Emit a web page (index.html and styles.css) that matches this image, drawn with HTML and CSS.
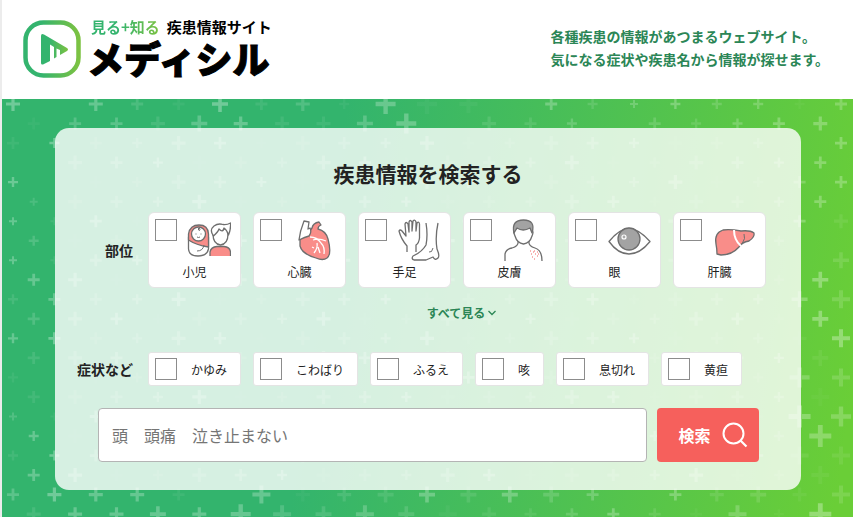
FILE: index.html
```html
<!DOCTYPE html>
<html lang="ja">
<head>
  <meta charset="UTF-8">
  <meta name="viewport" content="width=device-width, initial-scale=1.0">
  <title>メディシル</title>
  <link rel="stylesheet" href="styles.css">
</head>
<body>
  <header class="header">
    <a href="#" class="logo">
      <svg class="logo-mark" viewBox="0 0 58 58" aria-hidden="true">
        <defs>
          <linearGradient id="logo-green" x1="0" x2="1" y1="0" y2="0">
            <stop offset="0.3" stop-color="#34b46e"/>
            <stop offset="1" stop-color="#7cc242"/>
          </linearGradient>
        </defs>
        <rect x="2.5" y="2.5" width="53" height="53" rx="18" fill="none" stroke="url(#logo-green)" stroke-width="4.5"/>
        <path d="M18 16Q18 13 21 14.500L44 28Q46 29.500 44 31L37 35V30L33.500 28.500V37L31 38.500V27L27 24.500V41L20 44.500Q18 45 18 43Z" fill="url(#logo-green)"/>
      </svg>
      <span class="logo-text">
        <span class="logo-sub"><span class="logo-green">見る+知る</span><span>疾患情報サイト</span></span>
        <span class="logo-name">メディシル</span>
      </span>
    </a>
    <p class="tagline">各種疾患の情報があつまるウェブサイト。<br>気になる症状や疾患名から情報が探せます。</p>
  </header>

  <main class="hero">
    <svg id="pattern" class="pattern" aria-hidden="true"></svg>

    <form class="panel">
      <h1 class="panel-title">疾患情報を検索する</h1>

      <div class="row" role="group" aria-labelledby="label-part">
        <h2 class="row-label" id="label-part">部位</h2>
        <div class="options">
          <label class="card">
            <span class="card-top">
              <input type="checkbox" name="part">
              <svg class="card-icon" viewBox="0 0 44 44" aria-hidden="true">
                <path class="line white" d="M1.500 18V30Q2 37 11 37Q20 37 21.500 30V18Z"/>
                <path class="line pink" d="M1.500 21V15Q3 6 12 6Q21 6 21.500 15V28Q9 26 1.500 21Z"/>
                <circle class="line white" cx="11.500" cy="15" r="7"/>
                <path class="thin" d="M8.500 15h1M13.500 15h1M10 18Q11.500 19 13 18M12 11Q10 10 12 9Q14 10 12 12M17 26Q16 32 10 32"/>
                <path class="line pink" d="M23 37V33Q24 28 30 27.500H37Q43 28 43.500 33V37"/>
                <path class="line white" d="M26 15Q26 25 33.500 26Q41 25 41 15V10H27Z"/>
                <path class="line white" d="M26.500 17Q22 11 27 7Q31 4 36 5.500Q40 6 43.500 4Q44 10 41.500 16Q40 11 37 9Q36 14 32 10Q31 13 26.500 17Z"/>
              </svg>
            </span>
            <span class="card-name">小児</span>
          </label>
          <label class="card">
            <span class="card-top">
              <input type="checkbox" name="part">
              <svg class="card-icon" viewBox="0 0 44 44" aria-hidden="true">
                <path class="line pink" d="M8 21Q12 15 17 13L20 9Q21 4 27 3L29 6Q26 7 26 10Q34 12 36 20Q40 35 35 39Q31 42 24 39Q10 35 8 27Z"/>
                <path class="line white" d="M7 21Q8 12 12 2L17 3L16 10L18 9Q20 13 17 17Q13 18 7 21Z"/>
                <path class="vein" d="M18 18Q25 18 29 24Q33 28 32 35M21 21Q27 19 34 22M25 24Q26 29 22 34M26 28L28 34M22 29L20 28"/>
              </svg>
            </span>
            <span class="card-name">心臓</span>
          </label>
          <label class="card">
            <span class="card-top">
              <input type="checkbox" name="part">
              <svg class="card-icon" viewBox="0 0 44 44" aria-hidden="true">
                <path class="line" d="M10 33V27Q4 20 2 12Q3 10 5 12L9 17L8 5Q9 2 11 5L12 13V3Q13 0 15 3V12L16 2Q18 0 19 3V12L20 4Q22 2 22.500 5V19Q22 24 19 26V33"/>
                <path class="line" d="M29 4Q31 16 29 26Q25 33 16 37Q14 40 17 41H29L36 38Q38 42 41 39Q43 37 40 30Q38 18 41 4"/>
                <path class="thin" d="M36 29Q35 34 32 33"/>
              </svg>
            </span>
            <span class="card-name">手足</span>
          </label>
          <label class="card">
            <span class="card-top">
              <input type="checkbox" name="part">
              <svg class="card-icon" viewBox="0 0 44 44" aria-hidden="true">
                <path class="line" d="M3 42V35Q4 30 10 29Q17 27 16 22M27 22Q26 27 33 29Q40 31 40 42"/>
                <path class="line white" d="M12 12Q11 12 13 17Q15 24 21.500 25Q28 24 30 17Q32 12 30 12L28 9H15Z"/>
                <path class="line gray" d="M12 14Q9 1 21.500 1Q34 1 30 14L28 9Q21 13 15 9Z"/>
                <path class="rash" d="M28 32h1M32 32h1M35 33h1M29 35h1M33 35h1M30 38h1M35 37h1M32 40h1M36 35h1M31 33h1"/>
              </svg>
            </span>
            <span class="card-name">皮膚</span>
          </label>
          <label class="card">
            <span class="card-top">
              <input type="checkbox" name="part">
              <svg class="card-icon" viewBox="0 0 44 44" aria-hidden="true">
                <path class="line white" d="M2 22.500Q12 10 22 9.500Q32 10 43 22.500Q33 35 22 35Q11 35 2 22.500Z"/>
                <circle class="line gray" cx="22" cy="20" r="11"/>
                <circle cx="17" cy="18" r="2" fill="#aaa" stroke="#fff" stroke-width="1.200"/>
              </svg>
            </span>
            <span class="card-name">眼</span>
          </label>
          <label class="card">
            <span class="card-top">
              <input type="checkbox" name="part">
              <svg class="card-icon" viewBox="0 0 44 44" aria-hidden="true">
                <path class="line pink" d="M5 35Q5 30 4 25Q2 14 11 11Q18 10 29 12Q38 11 42 14Q43 18 37 22Q30 23 27 28Q20 36 9 36Z"/>
                <path d="M22 11Q22 21 29 27" fill="none" stroke="#fff" stroke-width="2"/>
                <path class="thin" d="M32 15Q34 19 30 25"/>
              </svg>
            </span>
            <span class="card-name">肝臓</span>
          </label>
        </div>
      </div>

      <div class="more">
        <button type="button" class="show-all">すべて見る
          <svg viewBox="0 0 8 6" aria-hidden="true"><path d="M0.500 1L4 4.500L7.500 1" fill="none" stroke="currentColor" stroke-width="1.300"/></svg>
        </button>
      </div>

      <div class="row" role="group" aria-labelledby="label-symptom">
        <h2 class="row-label" id="label-symptom">症状など</h2>
        <div class="options">
          <label class="chip"><input type="checkbox" name="symptom">かゆみ</label>
          <label class="chip"><input type="checkbox" name="symptom">こわばり</label>
          <label class="chip"><input type="checkbox" name="symptom">ふるえ</label>
          <label class="chip"><input type="checkbox" name="symptom">咳</label>
          <label class="chip"><input type="checkbox" name="symptom">息切れ</label>
          <label class="chip"><input type="checkbox" name="symptom">黄疸</label>
        </div>
      </div>

      <div class="search">
        <input type="text" class="search-input" aria-label="キーワード" placeholder="頭　頭痛　泣き止まない">
        <button type="submit" class="search-button">検索
          <svg viewBox="0 0 26 26" aria-hidden="true"><circle cx="11.500" cy="11.500" r="10" fill="none" stroke="currentColor" stroke-width="2"/><path d="M18.500 18.500L24.500 24.500" stroke="currentColor" stroke-width="2.200"/></svg>
        </button>
      </div>
    </form>
  </main>

  <script src="pattern.js"></script>
</body>
</html>
```

FILE: styles.css
```css
* {
  margin: 0;
  padding: 0;
  box-sizing: border-box;
}

body {
  display: flex;
  flex-direction: column;
  min-height: 100vh;
  border-left: 2px solid #ececec;
  background: #fff;
  color: #222;
  font-family: "Noto Sans CJK JP", sans-serif;
  font-size: 12px;
}

button,
input {
  font-family: inherit;
}

/* Header */
.header {
  display: flex;
  justify-content: space-between;
  align-items: center;
  padding: 18px 24px 19px 21px;
}

.logo {
  display: flex;
  align-items: center;
  gap: 6px;
  color: #000;
  text-decoration: none;
}

.logo-mark {
  width: 58px;
  height: 58px;
}

.logo-text {
  display: flex;
  flex-direction: column;
}

.logo-sub {
  display: flex;
  gap: 7px;
  padding-left: 4px;
  font-size: 15px;
  font-weight: 700;
  line-height: 18px;
}

.logo-green {
  background: linear-gradient(to right, #34b46e 40%, #7cc242);
  background-clip: text;
  -webkit-background-clip: text;
  color: transparent;
}

.logo-name {
  font-size: 37px;
  font-weight: 900;
  line-height: 44px;
  -webkit-text-stroke: 1px #000;
}

.tagline {
  padding-bottom: 2px;
  color: #2b8656;
  font-size: 14px;
  font-weight: 700;
  line-height: 23px;
}

/* Hero */
.hero {
  position: relative;
  flex: 1;
  padding: 29px 52px 27px 53px;
  background: linear-gradient(98deg, #33b46d 38%, #6ace37 98%);
}

.pattern {
  position: absolute;
  top: 0;
  left: 0;
  width: 100%;
  height: 100%;
}

.panel {
  position: relative;
  padding: 29px 22px 28px;
  border-radius: 14px;
  background: rgba(255, 255, 255, 0.8);
}

.panel-title {
  margin-bottom: 23px;
  font-size: 21px;
  font-weight: 700;
  line-height: 32px;
  text-align: center;
}

.row {
  display: flex;
  align-items: center;
  gap: 15px;
}

.row-label {
  flex: none;
  width: 56px;
  font-size: 14px;
  font-weight: 700;
  line-height: 20px;
  text-align: right;
}

.options {
  display: flex;
  flex-wrap: wrap;
  gap: 12px;
}

input[type="checkbox"] {
  appearance: none;
  flex: none;
  width: 22px;
  height: 22px;
  border: 1px solid #8c8c8c;
  background: #fff;
  cursor: pointer;
}

input[type="checkbox"]:checked {
  background: #2b8656;
}

/* Body part cards */
.card {
  display: flex;
  flex-direction: column;
  width: 93px;
  padding: 6px;
  border: 1px solid #e4e4e4;
  border-radius: 6px;
  background: #fff;
  cursor: pointer;
}

.card-top {
  display: flex;
  gap: 10px;
}

.card-icon {
  width: 44px;
  height: 44px;
}

.card-name {
  line-height: 18px;
  text-align: center;
}

.line {
  fill: none;
  stroke: #6e6e6e;
  stroke-width: 1.300;
  stroke-linejoin: round;
}

.white {
  fill: #fff;
}

.pink {
  fill: #f98d89;
}

.gray {
  fill: #a3a3a3;
}

.thin {
  fill: none;
  stroke: #6e6e6e;
  stroke-width: 1;
}

.vein {
  fill: none;
  stroke: #fff;
  stroke-width: 1.300;
}

.rash {
  stroke: #f06464;
  stroke-width: 1;
}

.more {
  display: flex;
  justify-content: center;
  margin: 15px 0 29px;
  padding-left: 67px;
}

.show-all {
  display: flex;
  align-items: center;
  gap: 3px;
  border: none;
  background: none;
  color: #2b8656;
  font-size: 12px;
  font-weight: 700;
  line-height: 20px;
  cursor: pointer;
}

.show-all svg {
  width: 8px;
  height: 6px;
}

/* Symptoms */
.chip {
  display: flex;
  align-items: center;
  gap: 14px;
  height: 34px;
  padding: 0 13px 0 6px;
  border: 1px solid #e4e4e4;
  border-radius: 3px;
  background: #fff;
  cursor: pointer;
}

/* Keyword search */
.search {
  display: flex;
  gap: 10px;
  margin-top: 22px;
  padding: 0 20px 0 21px;
}

.search-input {
  flex: 1;
  min-width: 0;
  height: 54px;
  padding: 0 13px;
  border: 1px solid #b4b4b4;
  border-radius: 4px;
  background: #fff;
  font-size: 16px;
}

.search-input::placeholder {
  color: #757575;
}

.search-button {
  display: flex;
  justify-content: center;
  align-items: center;
  gap: 11px;
  width: 102px;
  padding-left: 10px;
  border: none;
  border-radius: 4px;
  background: #f6605c;
  color: #fff;
  font-size: 16px;
  font-weight: 700;
  cursor: pointer;
}

.search-button svg {
  width: 26px;
  height: 26px;
}
```

FILE: pattern.js
```javascript
// Plus pattern behind the search panel.
// Each entry is [half size, opacity in percent], rows alternate by half a step.
const STEP_X = 41.4;
const STEP_Y = 19.53;

const fullRows = {
  0: [[7,30],[0,0],[7,25],[6,12],[6,5],[8,30],[6,8],[7,15],[5,5],[10,25],[10,4],[9,4],[0,0],[6,25],[5,12],[4,20],[5,25],[5,15],[5,20],[5,4],[6,22]],
  1: [[6,4],[6,18],[6,20],[7,10],[8,22],[7,25],[7,8],[7,7],[8,20],[10,25],[0,0],[7,10],[6,10],[5,18],[0,0],[6,15],[5,12],[5,20],[6,25],[7,25]],
  20: [[6,20],[7,30],[7,25],[7,25],[6,6],[0,0],[9,25],[7,4],[7,10],[8,10],[8,25],[8,10],[8,25],[8,15],[6,20],[0,0],[6,25],[7,10],[8,12],[7,5],[9,12]],
  21: [[7,10],[7,25],[7,25],[8,25],[7,25],[10,25],[9,15],[8,12],[9,20],[8,12],[9,4],[7,8],[6,8],[6,15],[6,25],[6,10],[6,4],[9,20],[5,4],[11,30]]
};

// "row,column" for the edges left and right of the panel
const edges = {
  "2,0": [6,6], "4,0": [5,28], "6,0": [4,25], "8,0": [4,25], "10,0": [5,10],
  "12,0": [5,25], "14,0": [5,6], "16,0": [4,15], "18,0": [5,8],
  "3,0": [0,0], "5,0": [4,12], "7,0": [5,15], "9,0": [6,25], "11,0": [6,15],
  "13,0": [6,10], "15,0": [6,8], "17,0": [5,25], "19,0": [6,25],
  "2,1": [5,30], "4,1": [0,0], "6,1": [4,8], "8,1": [4,8], "10,1": [6,25],
  "12,1": [6,30], "14,1": [0,0], "16,1": [4,6], "18,1": [5,30],
  "2,20": [6,25], "4,20": [6,25], "6,20": [7,8], "8,20": [8,12], "10,20": [9,14],
  "12,20": [9,30], "14,20": [9,15], "16,20": [10,20], "18,20": [9,8],
  "3,19": [6,25], "5,19": [6,25], "7,19": [0,0], "9,19": [8,30], "11,19": [8,30],
  "13,19": [8,6], "15,19": [9,3], "17,19": [11,25], "19,19": [9,5],
  "2,19": [0,0], "4,19": [6,20], "6,19": [6,25], "8,19": [0,0], "10,19": [8,25],
  "12,19": [7,5], "14,19": [10,20], "16,19": [11,25], "18,19": [9,8]
};

function plusAt(row, col) {
  if (fullRows[row]) return fullRows[row][col] || [7, 15];
  return edges[row + "," + col] || [5 + (row * 3 + col * 5) % 3, 4 + (row * 7 + col * 11) % 5 * 5];
}

function drawPattern() {
  const svg = document.getElementById("pattern");
  const box = svg.getBoundingClientRect();
  let shapes = "";
  for (let row = 0; row * STEP_Y < box.height + 10; row++) {
    for (let col = 0; col * STEP_X < box.width + 10; col++) {
      const [size, opacity] = plusAt(row, col);
      if (!size) continue;
      const x = 11 + col * STEP_X + (row % 2) * STEP_X / 2;
      const y = 5 + row * STEP_Y;
      const w = size / 5 + 0.2;
      shapes += `<path d="M${x - size} ${y - w}H${x - w}V${y - size}H${x + w}V${y - w}H${x + size}V${y + w}H${x + w}V${y + size}H${x - w}V${y + w}H${x - size}Z" fill="#fff" fill-opacity="${opacity / 100}"/>`;
    }
  }
  svg.innerHTML = shapes;
}

drawPattern();
window.addEventListener("resize", drawPattern);
```
